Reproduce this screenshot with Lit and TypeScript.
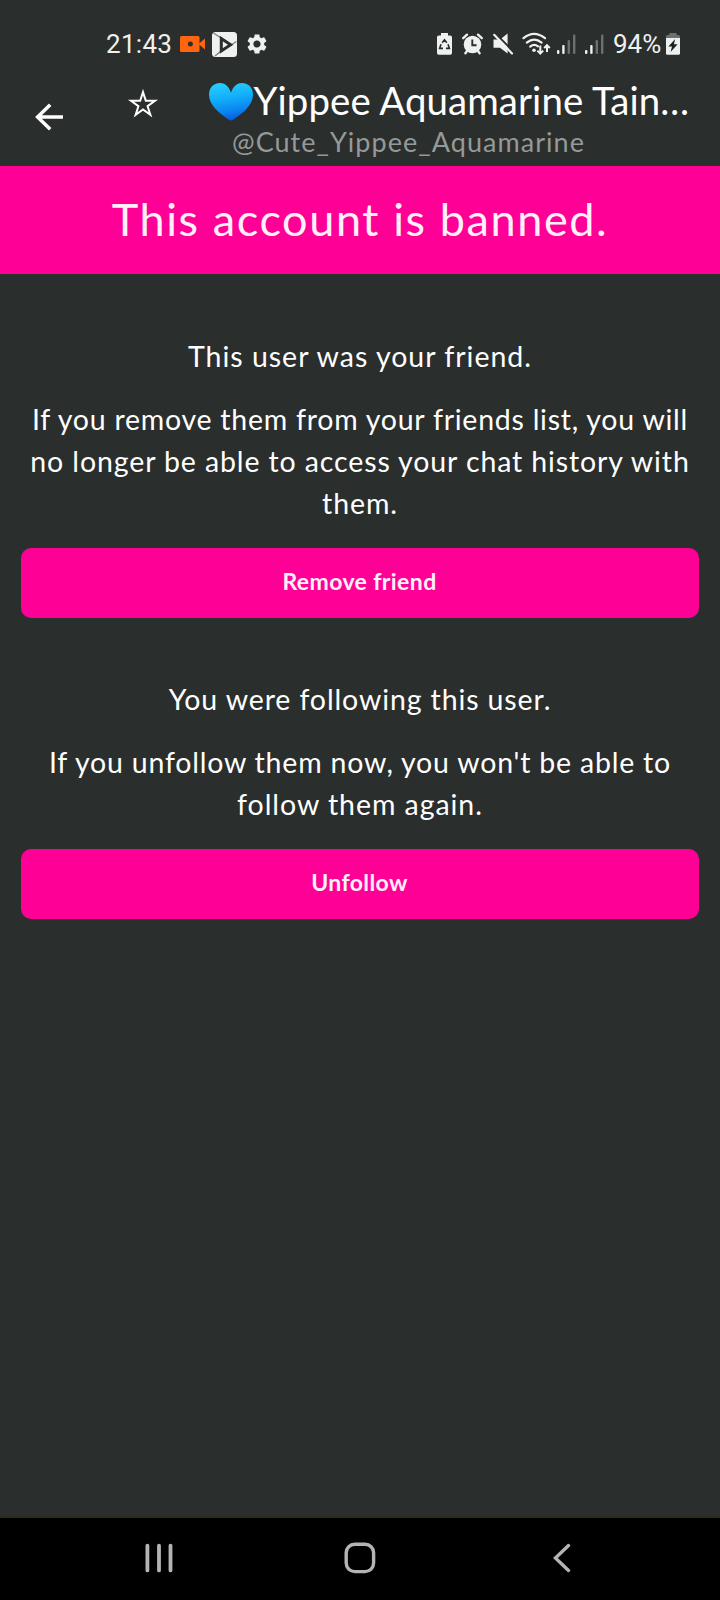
import { LitElement, html, css } from "lit";
import { customElement, property } from "lit/decorators.js";

@customElement("status-bar")
class StatusBar extends LitElement {
  static styles = css`
    :host {
      display: flex;
      align-items: center;
      height: 66px;
      padding: 11px 0 0 106px;
      box-sizing: content-box;
      font: 400 26px/30px Roboto, sans-serif;
      letter-spacing: 0.3px;
      color: #eef1f0;
    }
    svg { display: block; flex: none; }
    .time { width: 74px; }
    .play { margin-left: 6px; }
    .gear { margin-left: 9px; }
    .system { display: flex; align-items: center; margin-left: 169px; }
    .alarm { margin-left: 10px; }
    .mute { margin-left: 10px; }
    .wifi { margin-left: 8px; }
    .signal { margin-left: 6px; }
    .signal + .signal { margin-left: 9px; }
    .percent { width: 53px; margin-left: 9px; letter-spacing: 0; }
  `;

  private signal() {
    return html`<svg class="signal" width="19" height="22" viewBox="0 0 19 22">
      <rect x="0" y="17" width="2.4" height="4" rx="1" fill="#eef1f0" />
      <rect x="5.2" y="12" width="2.4" height="9" rx="1" fill="#eef1f0" />
      <rect x="10.6" y="7" width="2.4" height="14" rx="1" fill="#6c706f" />
      <rect x="16" y="1.5" width="2.4" height="19.5" rx="1" fill="#6c706f" />
    </svg>`;
  }

  render() {
    return html`
      <span class="time">21:43</span>
      <svg width="26" height="18" viewBox="0 0 26 18">
        <rect x="0" y="1" width="19.5" height="16" rx="1.5" fill="#ff6410" />
        <path d="M18.5 9L25 3.4V14.6Z" fill="#ff6410" />
        <circle cx="10.4" cy="9" r="2.5" fill="#2a2e2d" />
      </svg>
      <svg class="play" width="25" height="25" viewBox="0 0 25 25">
        <rect width="25" height="25" rx="3.5" fill="#eef1f0" />
        <path d="M1.5 1L9 6L19 13L24.5 9.5M9 19L3 24" fill="none" stroke="#7a7e7d" stroke-width="1.3" />
        <path d="M9.3 6.6V19L18.6 12.8Z" fill="none" stroke="#2a2e2d" stroke-width="3" />
      </svg>
      <svg class="gear" width="22" height="22" viewBox="1 1 22 22">
        <path fill="#eef1f0" d="M19.14 12.94c.04-.3.06-.61.06-.94 0-.32-.02-.64-.07-.94l2.03-1.58c.18-.14.23-.41.12-.61l-1.92-3.32c-.12-.22-.37-.29-.59-.22l-2.39.96c-.5-.38-1.03-.7-1.62-.94l-.36-2.54c-.04-.24-.24-.41-.48-.41h-3.84c-.24 0-.43.17-.47.41l-.36 2.54c-.59.24-1.13.57-1.62.94l-2.39-.96c-.22-.08-.47 0-.59.22L2.74 8.87c-.12.21-.08.47.12.61l2.03 1.58c-.05.3-.09.63-.09.94s.02.64.07.94l-2.03 1.58c-.18.14-.23.41-.12.61l1.92 3.32c.12.22.37.29.59.22l2.39-.96c.5.38 1.03.7 1.62.94l.36 2.54c.05.24.24.41.48.41h3.84c.24 0 .44-.17.47-.41l.36-2.54c.59-.24 1.13-.56 1.62-.94l2.39.96c.22.08.47 0 .59-.22l1.92-3.32c.12-.22.07-.47-.12-.61l-2.01-1.58zM12 15.6c-1.98 0-3.6-1.62-3.6-3.6s1.62-3.6 3.6-3.6 3.6 1.62 3.6 3.6-1.62 3.6-3.6 3.6z" />
      </svg>
      <div class="system">
        <svg width="15" height="22" viewBox="0 0 15 22">
          <path d="M4 0H11V2.5H13.2Q15 2.5 15 4.3V20Q15 21.8 13.2 21.8H1.8Q0 21.8 0 20V4.3Q0 2.5 1.8 2.5H4Z" fill="#eef1f0" />
          <path d="M5.2 9.8L7.5 6.8L9.8 9.8M11 11.2L12.4 15.4H9M6 15.4H2.6L4 11.2" fill="none" stroke="#2a2e2d" stroke-width="1.6" />
        </svg>
        <svg class="alarm" width="21" height="22" viewBox="0 0 21 22">
          <circle cx="10.5" cy="11.5" r="8.8" fill="#eef1f0" />
          <path d="M1.2 5.2L5 1.6M19.8 5.2L16 1.6M5 18L3.4 20.2M16 18L17.6 20.2" stroke="#eef1f0" stroke-width="2.3" stroke-linecap="round" />
          <path d="M10.3 6.5V12.2H14.6" fill="none" stroke="#2a2e2d" stroke-width="1.9" />
        </svg>
        <svg class="mute" width="21" height="22" viewBox="0 0 21 22">
          <path d="M0.5 6.5H7L14.6 0.5V20.5L7 14.8H0.5Z" fill="#eef1f0" />
          <path d="M2 0L20.6 18.8" stroke="#2a2e2d" stroke-width="2" />
          <path d="M1.2 1.8L19 20.4" stroke="#eef1f0" stroke-width="2.2" stroke-linecap="round" />
        </svg>
        <svg class="wifi" width="29" height="24" viewBox="0 0 29 24">
          <g fill="none" stroke="#eef1f0" stroke-width="2.2" stroke-linecap="round">
            <path d="M1.5 6.2Q12 -2.4 23 6.2" />
            <path d="M4.8 10.6Q12.2 4.6 19.6 10.6" />
            <path d="M8.2 14.6Q12.2 11.4 16 14.4" />
          </g>
          <circle cx="12" cy="18.2" r="1.8" fill="#eef1f0" />
          <path d="M18.3 13.5V21M15.4 18.6L18.3 21.6L21.2 18.6M25 20V13.5M22.2 16L25 13.2L27.8 16" fill="none" stroke="#eef1f0" stroke-width="2" />
        </svg>
        ${this.signal()}${this.signal()}
        <span class="percent">94%</span>
        <svg width="14" height="22" viewBox="0 0 14 22">
          <path d="M3.4 0H10.6V2H12.4Q14 2 14 3.6V5H0V3.6Q0 2 1.6 2H3.4Z" fill="#6c706f" />
          <path d="M0 5H14V20.2Q14 21.8 12.4 21.8H1.6Q0 21.8 0 20.2Z" fill="#eef1f0" />
          <path d="M9.2 6L2.4 13.4H6L4.6 19L11.6 11.2H7.9Z" fill="#1c201f" />
        </svg>
      </div>
    `;
  }
}

@customElement("profile-header")
class ProfileHeader extends LitElement {
  static styles = css`
    :host {
      display: grid;
      grid-template-columns: 93px 116px 1fr;
      height: 89px;
      color: #fff;
      font-family: Lato, sans-serif;
    }
    svg { display: block; flex: none; }
    .back { padding: 26px 0 0 34px; }
    .star { padding: 10px 0 0 34px; }
    .name { display: flex; height: 48px; font-size: 38.4px; line-height: 46px; letter-spacing: 0.08px; white-space: nowrap; }
    .heart { margin: 6px 0.5px 0 0; }
    .handle { padding-left: 23px; font-size: 27px; line-height: 34px; letter-spacing: 1.04px; color: #959998; }
  `;

  render() {
    return html`
      <div class="back">
        <svg width="30" height="28" viewBox="0 0 30 28">
          <path d="M29 14H4M16.2 1.8L3.6 14L16.2 26.2" fill="none" stroke="#fff" stroke-width="3.5" />
        </svg>
      </div>
      <div class="star">
        <svg width="32" height="32" viewBox="-16 -17.7 32 32">
          <path d="M0-12.6L2.83-3.89H11.98L4.57 1.49L7.41 10.19L0 4.81L-7.41 10.19L-4.57 1.49L-11.98-3.89H-2.83Z"
            fill="none" stroke="#fff" stroke-width="2" stroke-miterlimit="10" />
        </svg>
      </div>
      <div>
        <div class="name">
          <svg class="heart" width="44" height="38" viewBox="0 0 44 38">
            <defs>
              <linearGradient id="blue" x1="0.35" y1="0" x2="0.55" y2="1">
                <stop offset="0" stop-color="#27cdfd" />
                <stop offset="0.4" stop-color="#12aefa" />
                <stop offset="0.75" stop-color="#0a83f0" />
                <stop offset="1" stop-color="#0757dc" />
              </linearGradient>
            </defs>
            <path fill="url(#blue)" d="M22 9.8C24 3.2 28.4 0 33 0C39.6 0 44 5 44 11.8C44 22.5 33 30.5 24.3 36.8Q22 38.3 19.7 36.8C11 30.5 0 22.5 0 11.8C0 5 4.4 0 11 0C15.6 0 20 3.2 22 9.8Z" />
          </svg>
          <span>Yippee Aquamarine Tain…</span>
        </div>
        <div class="handle">@Cute_Yippee_Aquamarine</div>
      </div>
    `;
  }
}

type Line = { text: string; tracking: number };

@customElement("relation-section")
class RelationSection extends LitElement {
  static styles = css`
    :host {
      display: flex;
      flex-direction: column;
      padding: 0 21px;
      font-family: Lato, sans-serif;
      color: #fff;
    }
    .title, .line {
      font-size: 28.5px;
      line-height: 42px;
      text-align: center;
      white-space: nowrap;
    }
    .title { margin-bottom: 21px; }
    .action {
      display: block;
      width: 100%;
      height: 70px;
      margin-top: 24px;
      padding: 0 1px 4px 0;
      border: 0;
      border-radius: 10px;
      background: #ff0096;
      color: #fff0fa;
      font: 700 23px/66px Lato, sans-serif;
      letter-spacing: 0.4px;
    }
  `;

  @property({ attribute: false }) heading!: Line;
  @property({ attribute: false }) lines: Line[] = [];
  @property() action = "";

  render() {
    return html`
      <div class="title" style="letter-spacing:${this.heading.tracking}px">${this.heading.text}</div>
      ${this.lines.map((l) => html`<div class="line" style="letter-spacing:${l.tracking}px">${l.text}</div>`)}
      <button class="action">${this.action}</button>
    `;
  }
}

@customElement("app-root")
class AppRoot extends LitElement {
  static styles = css`
    :host {
      display: flex;
      flex-direction: column;
      width: 720px;
      height: 1600px;
      overflow: hidden;
      background: #2a2e2d;
    }
    .banner {
      height: 108px;
      box-sizing: border-box;
      padding-bottom: 2px;
      background: #ff0096;
      color: #fff0fa;
      font: 400 45px/106px Lato, sans-serif;
      letter-spacing: 1.6px;
      text-align: center;
    }
    .content {
      display: flex;
      flex-direction: column;
      gap: 60px;
      flex: 1;
      padding-top: 61px;
    }
    .nav {
      display: flex;
      align-items: center;
      height: 84px;
      flex: none;
      box-sizing: border-box;
      padding: 0 0 2px 145px;
      border-top: 2px solid #2b2f14;
      background: #000;
    }
    .nav svg { display: block; }
    .home { margin: 0 177px 0 171px; }
  `;

  render() {
    return html`
      <status-bar></status-bar>
      <profile-header></profile-header>
      <div class="banner">This account is banned.</div>
      <div class="content">
        <relation-section
          .heading=${{ text: "This user was your friend.", tracking: 0.99 }}
          .lines=${[
            { text: "If you remove them from your friends list, you will", tracking: 0.75 },
            { text: "no longer be able to access your chat history with", tracking: 0.88 },
            { text: "them.", tracking: 0.9 },
          ]}
          action="Remove friend"
        ></relation-section>
        <relation-section
          .heading=${{ text: "You were following this user.", tracking: 0.88 }}
          .lines=${[
            { text: "If you unfollow them now, you won't be able to", tracking: 0.79 },
            { text: "follow them again.", tracking: 0.95 },
          ]}
          action="Unfollow"
        ></relation-section>
      </div>
      <div class="nav">
        <svg width="28" height="30" viewBox="0 0 28 30">
          <path d="M2.4 2.6V27.4M14 2.6V27.4M25.5 2.6V27.4" stroke="#b4b4b4" stroke-width="3.8" stroke-linecap="round" />
        </svg>
        <svg class="home" width="32" height="32" viewBox="0 0 32 32">
          <rect x="2.2" y="2.2" width="27.4" height="27.4" rx="8.5" fill="none" stroke="#b4b4b4" stroke-width="3.4" />
        </svg>
        <svg width="19" height="30" viewBox="0 0 19 30">
          <path d="M15.5 2.6L2.4 15L15.5 27.4" fill="none" stroke="#b4b4b4" stroke-width="3.4" stroke-linecap="round" />
        </svg>
      </div>
    `;
  }
}
